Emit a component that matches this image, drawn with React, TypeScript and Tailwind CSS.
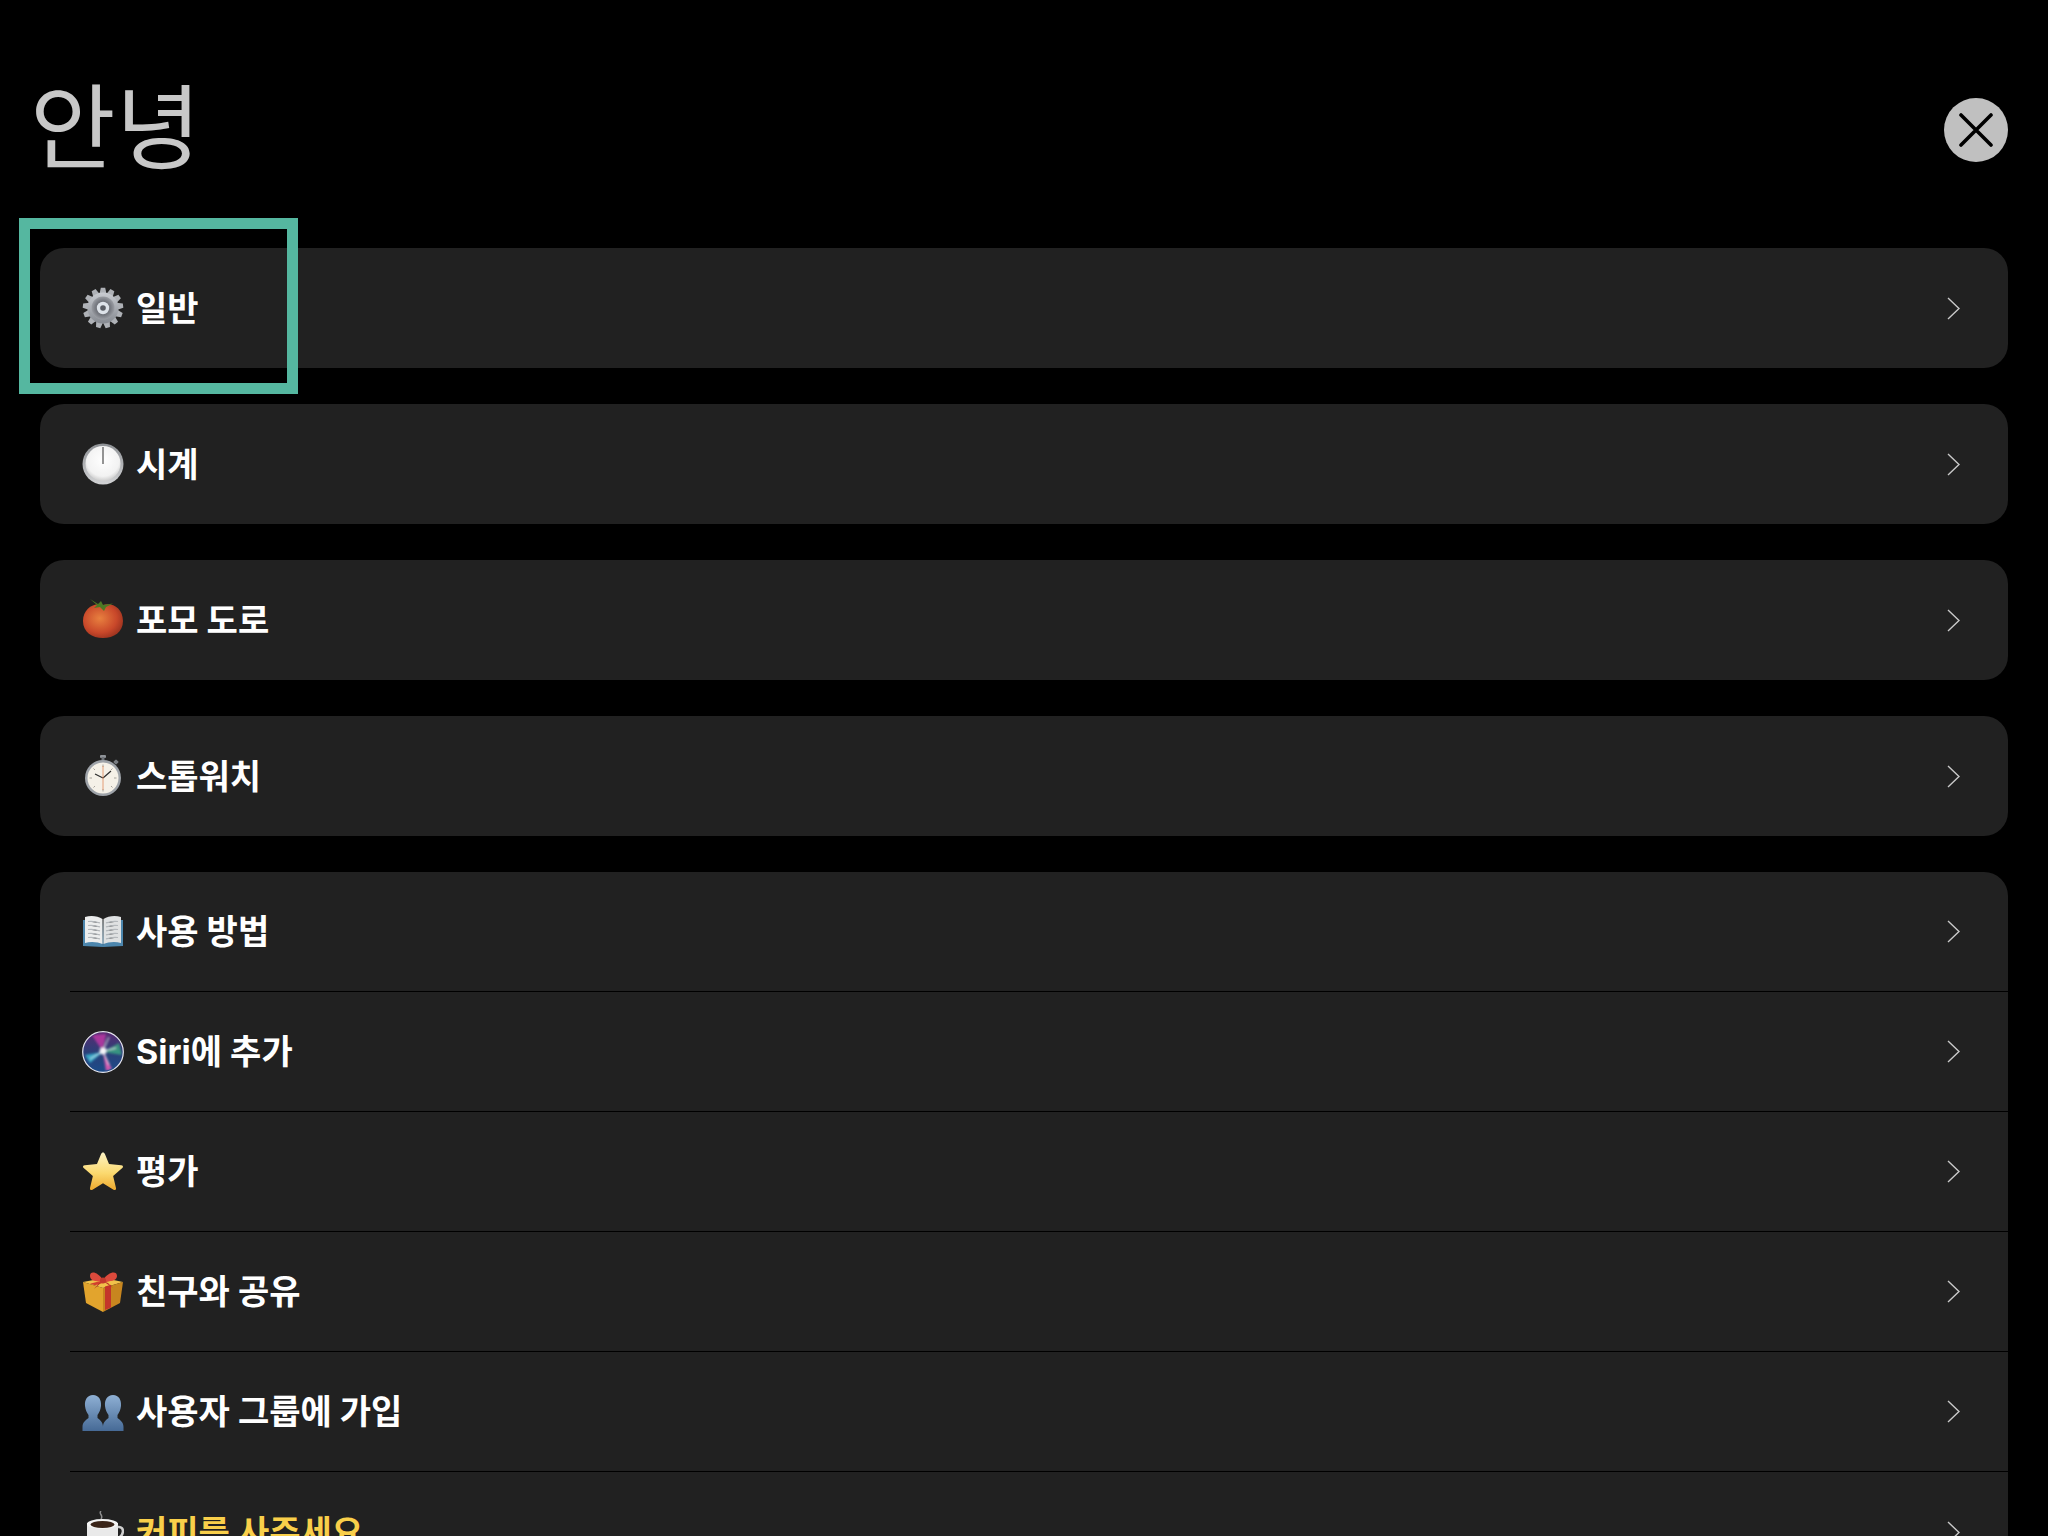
import type { ReactNode } from 'react';

function GearIcon() {
  const teeth = Array.from({ length: 13 }, (_, i) => (i * 360) / 13);
  return (
    <svg width="42" height="42" viewBox="0 0 42 42">
      <defs>
        <linearGradient id="gear" x1="0" y1="0" x2="0" y2="1">
          <stop offset="0" stopColor="#c9ccd1" />
          <stop offset="1" stopColor="#868a91" />
        </linearGradient>
        <radialGradient id="gearDish" cx="0.5" cy="0.5" r="0.5">
          <stop offset="0" stopColor="#45484f" />
          <stop offset="0.7" stopColor="#7b7e85" />
          <stop offset="1" stopColor="#9a9da3" />
        </radialGradient>
      </defs>
      {teeth.map((a) => (
        <path key={a} d="M17.5 7L18.8 0.8H23.2L24.5 7Z" fill="#aeb1b6" transform={`rotate(${a} 21 21)`} />
      ))}
      <circle cx="21" cy="21" r="15.5" fill="url(#gear)" />
      <circle cx="21" cy="21" r="11.5" fill="url(#gearDish)" />
      <circle cx="21" cy="21" r="6.2" fill="#dde2e8" />
      <circle cx="21" cy="21" r="2.8" fill="#595c63" />
    </svg>
  );
}

function ClockIcon() {
  return (
    <svg width="42" height="42" viewBox="0 0 42 42">
      <defs>
        <linearGradient id="clockRim" x1="0" y1="0" x2="0" y2="1">
          <stop offset="0" stopColor="#8e9195" />
          <stop offset="1" stopColor="#d2d3d5" />
        </linearGradient>
        <radialGradient id="clockFace" cx="0.5" cy="0.4" r="0.62">
          <stop offset="0" stopColor="#ffffff" />
          <stop offset="0.75" stopColor="#f2f2f2" />
          <stop offset="1" stopColor="#c8c8c8" />
        </radialGradient>
      </defs>
      <circle cx="21" cy="21" r="20.5" fill="url(#clockRim)" />
      <circle cx="21" cy="20.5" r="17.5" fill="url(#clockFace)" />
      <rect x="20" y="4" width="2" height="17" fill="#949494" />
    </svg>
  );
}

function TomatoIcon() {
  return (
    <svg width="42" height="42" viewBox="0 0 42 42">
      <defs>
        <radialGradient id="tomato" cx="0.42" cy="0.42" r="0.65">
          <stop offset="0" stopColor="#e8803f" />
          <stop offset="0.65" stopColor="#c9482a" />
          <stop offset="1" stopColor="#96301e" />
        </radialGradient>
      </defs>
      <path d="M21 6C30 3 41 9 41 22C41 33 32 39 21 39C10 39 1 33 1 22C1 10 12 3 21 6Z" fill="url(#tomato)" />
      <path d="M8 0L16 5L19 2L21 6L31 4.5L24 8L22 12L18 8L12 9L15 6Z" fill="#4d7a24" />
    </svg>
  );
}

function StopwatchIcon() {
  return (
    <svg width="42" height="42" viewBox="0 0 42 42">
      <rect x="18" y="0" width="6" height="3" rx="1" fill="#8f9398" />
      <rect x="19.5" y="2" width="3" height="5" fill="#6f7378" />
      <rect x="32" y="5" width="4" height="4" rx="1" fill="#777b80" transform="rotate(45 34 7)" />
      <circle cx="21" cy="23" r="18" fill="#9ea3a9" />
      <circle cx="21" cy="23" r="15.5" fill="#f5f1e8" />
      <g stroke="#a8a49c" strokeWidth="1">
        <path d="M21 9.5V12M21 34V36.5M7.5 23H10M32 23H34.5M11.5 13.5L13 15M29 31L30.5 32.5M30.5 13.5L29 15M13 31L11.5 32.5" />
      </g>
      <path d="M21 23L13 19M21 23L29 16" stroke="#2d2d2d" strokeWidth="1.2" />
      <path d="M21 11V35" stroke="#e08a5c" strokeWidth="0.8" />
    </svg>
  );
}

function BookIcon() {
  return (
    <svg width="42" height="42" viewBox="0 0 42 42">
      <path d="M1 9H20L21 36L1 35Z" fill="#4c86ad" />
      <path d="M41 9H22L21 36L41 35Z" fill="#4c86ad" />
      <path d="M3 6C9 4 16 5 20.5 8V33C16 31 9 30 3 32Z" fill="#eceded" />
      <path d="M39 6C33 4 26 5 21.5 8V33C26 31 33 30 39 32Z" fill="#dfe1e2" />
      <g stroke="#b4b8bc" strokeWidth="1.2">
        <path d="M6 10.5C10 10 14 10.5 18 12M6 14.5C10 14 14 14.5 18 16M6 18.5C10 18 14 18.5 18 20M6 22.5C10 22 14 22.5 18 24M6 26.5C10 26 14 26.5 18 28" />
        <path d="M36 10.5C32 10 28 10.5 24 12M36 14.5C32 14 28 14.5 24 16M36 18.5C32 18 28 18.5 24 20M36 22.5C32 22 28 22.5 24 24M36 26.5C32 26 28 26.5 24 28" />
      </g>
    </svg>
  );
}

function SiriIcon() {
  return (
    <svg width="42" height="42" viewBox="0 0 42 42">
      <defs>
        <linearGradient id="siriBg" x1="0" y1="0" x2="0" y2="1">
          <stop offset="0" stopColor="#5a2a72" />
          <stop offset="0.5" stopColor="#2c3f78" />
          <stop offset="1" stopColor="#1a4c8a" />
        </linearGradient>
        <clipPath id="siriClip">
          <circle cx="21" cy="21" r="19" />
        </clipPath>
        <filter id="siriBlur">
          <feGaussianBlur stdDeviation="1" />
        </filter>
      </defs>
      <circle cx="21" cy="21" r="20.3" fill="url(#siriBg)" stroke="#e6e6f0" strokeWidth="1.2" />
      <g clipPath="url(#siriClip)" filter="url(#siriBlur)">
        <path d="M21 21L10 4L24 3Z" fill="#c23aa8" opacity="0.8" />
        <path d="M21 21L37 12L40 24Z" fill="#3db884" opacity="0.7" />
        <path d="M21 21L3 24L8 32Z" fill="#39c0d8" opacity="0.8" />
        <path d="M21 21L30 38L24 40Z" fill="#e05ab4" opacity="0.9" />
        <path d="M21 20L8 28M21 20L34 17M21 20L27 6M21 20L27 34" stroke="#ffffff" strokeWidth="1.4" opacity="0.6" />
        <circle cx="21" cy="20" r="3.5" fill="#ffffff" opacity="0.9" />
      </g>
    </svg>
  );
}

function StarIcon() {
  return (
    <svg width="44" height="42" viewBox="0 0 44 42">
      <defs>
        <linearGradient id="star" x1="0" y1="0" x2="0" y2="1">
          <stop offset="0" stopColor="#fdf3c4" />
          <stop offset="0.55" stopColor="#fbd96f" />
          <stop offset="1" stopColor="#eda92e" />
        </linearGradient>
      </defs>
      <path
        d="M22 0.5C23 0.5 23.6 1.2 24 2.2L28.3 12.7L41 13.8C43 14 43.6 15.6 42.2 16.8L32.6 25.2L35.6 37.8C36 39.6 34.6 40.5 33 39.6L22 32.8L11 39.6C9.4 40.5 8 39.6 8.4 37.8L11.4 25.2L1.8 16.8C0.4 15.6 1 14 3 13.8L15.7 12.7L20 2.2C20.4 1.2 21 0.5 22 0.5Z"
        fill="url(#star)"
      />
    </svg>
  );
}

function GiftIcon() {
  return (
    <svg width="42" height="42" viewBox="0 0 42 42">
      <path d="M1 11L22 7L41 11L21 17Z" fill="#f1c24a" />
      <path d="M1 11L21 17V41L4 32Z" fill="#e2a42d" />
      <path d="M41 11L21 17V41L38 32Z" fill="#c8861f" />
      <path d="M23 15.5L29 13.7V36.5L23 39Z" fill="#c4352a" />
      <path d="M8 12.8L13 14.3L31 9L26 8Z" fill="#d2402e" />
      <path d="M21 9C16 1 8 -1 8 5C8 10 15 11 21 10C27 11 35 10 35 5C35 -1 26 1 21 9Z" fill="#dc4a3c" />
      <path d="M21 10L12 18L16 13Z M21 10L31 17L26 12Z" fill="#b93228" />
      <circle cx="21" cy="9.5" r="3" fill="#c43a2e" />
    </svg>
  );
}

function PeopleIcon() {
  return (
    <svg width="42" height="42" viewBox="0 0 42 42">
      <defs>
        <linearGradient id="people" x1="0" y1="0" x2="0" y2="1">
          <stop offset="0" stopColor="#8fb0d4" />
          <stop offset="1" stopColor="#466a96" />
        </linearGradient>
      </defs>
      <path d="M11 4C17 4 19.5 9 19 15C18.6 19 17 22 15.5 24V27C18 29 21 31 21 36V40H0.5V36C0.5 31 4 29 6.5 27V24C5 22 3.4 19 3 15C2.5 9 5 4 11 4Z" fill="url(#people)" />
      <path d="M31 4C37 4 39.5 9 39 15C38.6 19 37 22 35.5 24V27C38 29 41.5 31 41.5 36V40H21V36C21 31 24 29 26.5 27V24C25 22 23.4 19 23 15C22.5 9 25 4 31 4Z" fill="url(#people)" />
    </svg>
  );
}

function CoffeeIcon() {
  return (
    <svg width="42" height="42" viewBox="0 0 42 42">
      <path d="M19 0C16 3 22 4 19 8" fill="none" stroke="#8d8d8d" strokeWidth="1.5" />
      <path d="M5 12H36V24C36 32 30 38 20 38C11 38 5 32 5 24Z" fill="#e9e9e9" />
      <ellipse cx="20.5" cy="13" rx="15.5" ry="5" fill="#f4f4f4" />
      <ellipse cx="20.5" cy="13.5" rx="12" ry="3.5" fill="#3a2418" />
      <path d="M36 16C43 15 43 26 33 28" fill="none" stroke="#cfcfcf" strokeWidth="2.5" />
    </svg>
  );
}

type Item = { icon: ReactNode; label: string; highlight?: boolean };

const singles: Item[] = [
  { icon: <GearIcon />, label: '일반' },
  { icon: <ClockIcon />, label: '시계' },
  { icon: <TomatoIcon />, label: '포모 도로' },
  { icon: <StopwatchIcon />, label: '스톱워치' },
];

const grouped: Item[] = [
  { icon: <BookIcon />, label: '사용 방법' },
  { icon: <SiriIcon />, label: 'Siri에 추가' },
  { icon: <StarIcon />, label: '평가' },
  { icon: <GiftIcon />, label: '친구와 공유' },
  { icon: <PeopleIcon />, label: '사용자 그룹에 가입' },
  { icon: <CoffeeIcon />, label: '커피를 사주세요', highlight: true },
];

function Chevron() {
  return (
    <svg width="13" height="23" viewBox="0 0 13 23" fill="none" className="shrink-0">
      <path d="M1 1L12 11.5L1 22" stroke="#c9c9c9" strokeWidth="1.4" />
    </svg>
  );
}

function RowContent({ item }: { item: Item }) {
  return (
    <>
      <div className="flex w-[42px] shrink-0 justify-center">{item.icon}</div>
      <span
        className={`mt-[1px] ml-[12px] grow text-[34px] leading-none font-bold ${
          item.highlight ? 'text-[#f9cf4a]' : 'text-white'
        }`}
      >
        {item.label}
      </span>
      <Chevron />
    </>
  );
}

export default function App() {
  return (
    <div
      className="relative h-[1536px] overflow-hidden bg-black px-[40px] font-['Inter','Noto_Sans_CJK_KR',sans-serif]"
    >
      {/* Header */}
      <div className="flex h-[248px] items-start justify-between">
        <h1 className="mt-[70px] -ml-[10px] text-[93px] leading-[116px] font-normal text-[#c8c8c8]">안녕</h1>
        <button className="mt-[98px] flex size-[64px] items-center justify-center rounded-full bg-[#c0c0c0]">
          <svg width="34" height="34" viewBox="0 0 34 34" fill="none">
            <path d="M2 2L32 32M32 2L2 32" stroke="#000" strokeWidth="3.6" strokeLinecap="round" />
          </svg>
        </button>
      </div>

      {/* Single cards */}
      <div className="flex flex-col gap-[36px]">
        {singles.map((item) => (
          <div key={item.label} className="flex h-[120px] items-center rounded-[24px] bg-[#212121] pr-[48px] pl-[42px]">
            <RowContent item={item} />
          </div>
        ))}

        {/* Grouped card */}
        <div className="rounded-[24px] bg-[#212121] pl-[30px]">
          {grouped.map((item, i) => (
            <div
              key={item.label}
              className={`box-border flex h-[120px] items-center pr-[48px] pl-[12px] ${
                i < grouped.length - 1 ? 'border-b-[1.5px] border-black' : ''
              }`}
            >
              <RowContent item={item} />
            </div>
          ))}
        </div>
      </div>

      {/* Highlight frame over the first row */}
      <div className="pointer-events-none absolute top-[218px] left-[19px] h-[176px] w-[279px] border-[11px] border-[#55b7a0]" />
    </div>
  );
}
